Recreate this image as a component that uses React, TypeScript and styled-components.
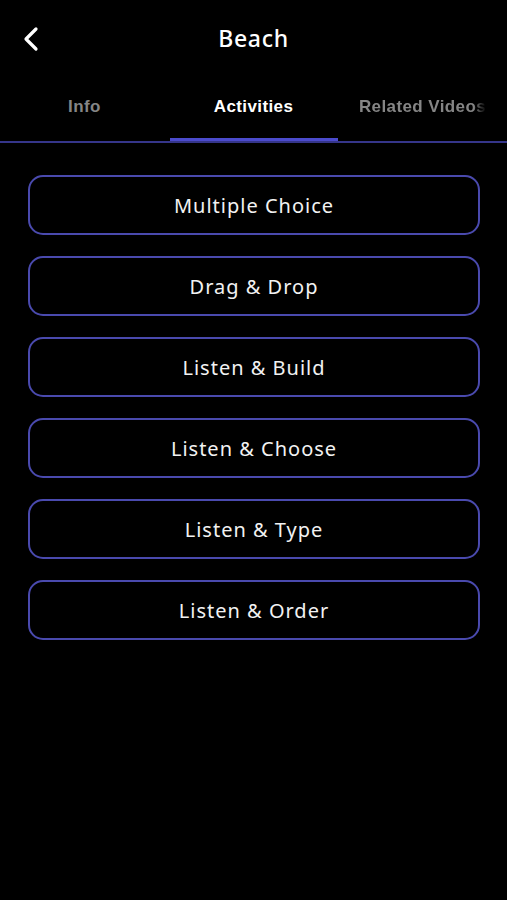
import styled, {createGlobalStyle} from "styled-components";

const GlobalStyle = createGlobalStyle`
    html, body {
        margin: 0;
        padding: 0;
        background: #000;
    }
    body {
        font-family: "Noto Sans", "Liberation Sans", sans-serif;
        color: #fff;
    }
`

const activities = [
    "Multiple Choice",
    "Drag & Drop",
    "Listen & Build",
    "Listen & Choose",
    "Listen & Type",
    "Listen & Order",
];

const tabs = ["Info", "Activities", "Related Videos"];

export default function App() {
    return (
        <Screen>
            <GlobalStyle/>
            <Header>
                <BackButton aria-label="Back">
                    <svg width="22" height="26" viewBox="0 0 22 26" fill="none">
                        <path d="M15 3 L5 13 L15 23" stroke="#fff" strokeWidth="3.2"
                              strokeLinecap="round" strokeLinejoin="round"/>
                    </svg>
                </BackButton>
                <Title>Beach</Title>
            </Header>
            <TabBar>
                {tabs.map((t, i) => (
                    <Tab key={t} active={t === "Activities"}>
                        <TabLabel active={t === "Activities"} faded={i === tabs.length - 1}>{t}</TabLabel>
                    </Tab>
                ))}
            </TabBar>
            <ActivityList>
                {activities.map(a => (
                    <ActivityButton key={a}>{a}</ActivityButton>
                ))}
            </ActivityList>
        </Screen>
    );
}

const Screen = styled.div`
    width: 507px;
    height: 900px;
    background: #000;
    overflow: hidden;
`

const Header = styled.div`
    position: relative;
    height: 78px;
    display: flex;
    align-items: center;
    justify-content: center;
`

const BackButton = styled.button`
    position: absolute;
    left: 21px;
    top: 26px;
    background: none;
    border: none;
    padding: 0;
    display: flex;
`

const Title = styled.h1`
    margin: 0 0 2px;
    font-family: "Noto Sans", sans-serif;
    font-size: 23px;
    font-weight: 500;
    letter-spacing: 0.7px;
    color: #fff;
`

const TabBar = styled.div`
    display: flex;
    border-bottom: 2px solid #35358a;
`

const Tab = styled.div<{active?: boolean}>`
    position: relative;
    flex: 0 0 169px;
    height: 63px;
    display: flex;
    align-items: center;
    justify-content: center;
    overflow: hidden;

    &::after {
        content: "";
        display: ${p => p.active ? "block" : "none"};
        position: absolute;
        left: 1px;
        right: 0;
        bottom: -1px;
        height: 4px;
        background: #4b4bcc;
    }
`

const TabLabel = styled.span<{active?: boolean; faded?: boolean}>`
    font-family: "Liberation Sans", "Noto Sans", sans-serif;
    font-size: 17px;
    font-weight: 700;
    letter-spacing: 0.4px;
    white-space: nowrap;
    margin-top: -5px;
    color: ${p => p.active ? "#fff" : "#858585"};
    ${p => p.faded && `
        -webkit-mask-image: linear-gradient(to right, #000 90%, transparent 100%);
        mask-image: linear-gradient(to right, #000 90%, transparent 100%);
    `}
`

const ActivityList = styled.div`
    display: flex;
    flex-direction: column;
    gap: 21px;
    padding: 32px 27px 0 28px;
`

const ActivityButton = styled.button`
    height: 60px;
    box-sizing: border-box;
    background: #000;
    border: 2px solid #4a4aae;
    border-radius: 15px;
    color: #f2f2f2;
    font-family: "Noto Sans", sans-serif;
    font-size: 20px;
    font-weight: 400;
    letter-spacing: 1px;
`
